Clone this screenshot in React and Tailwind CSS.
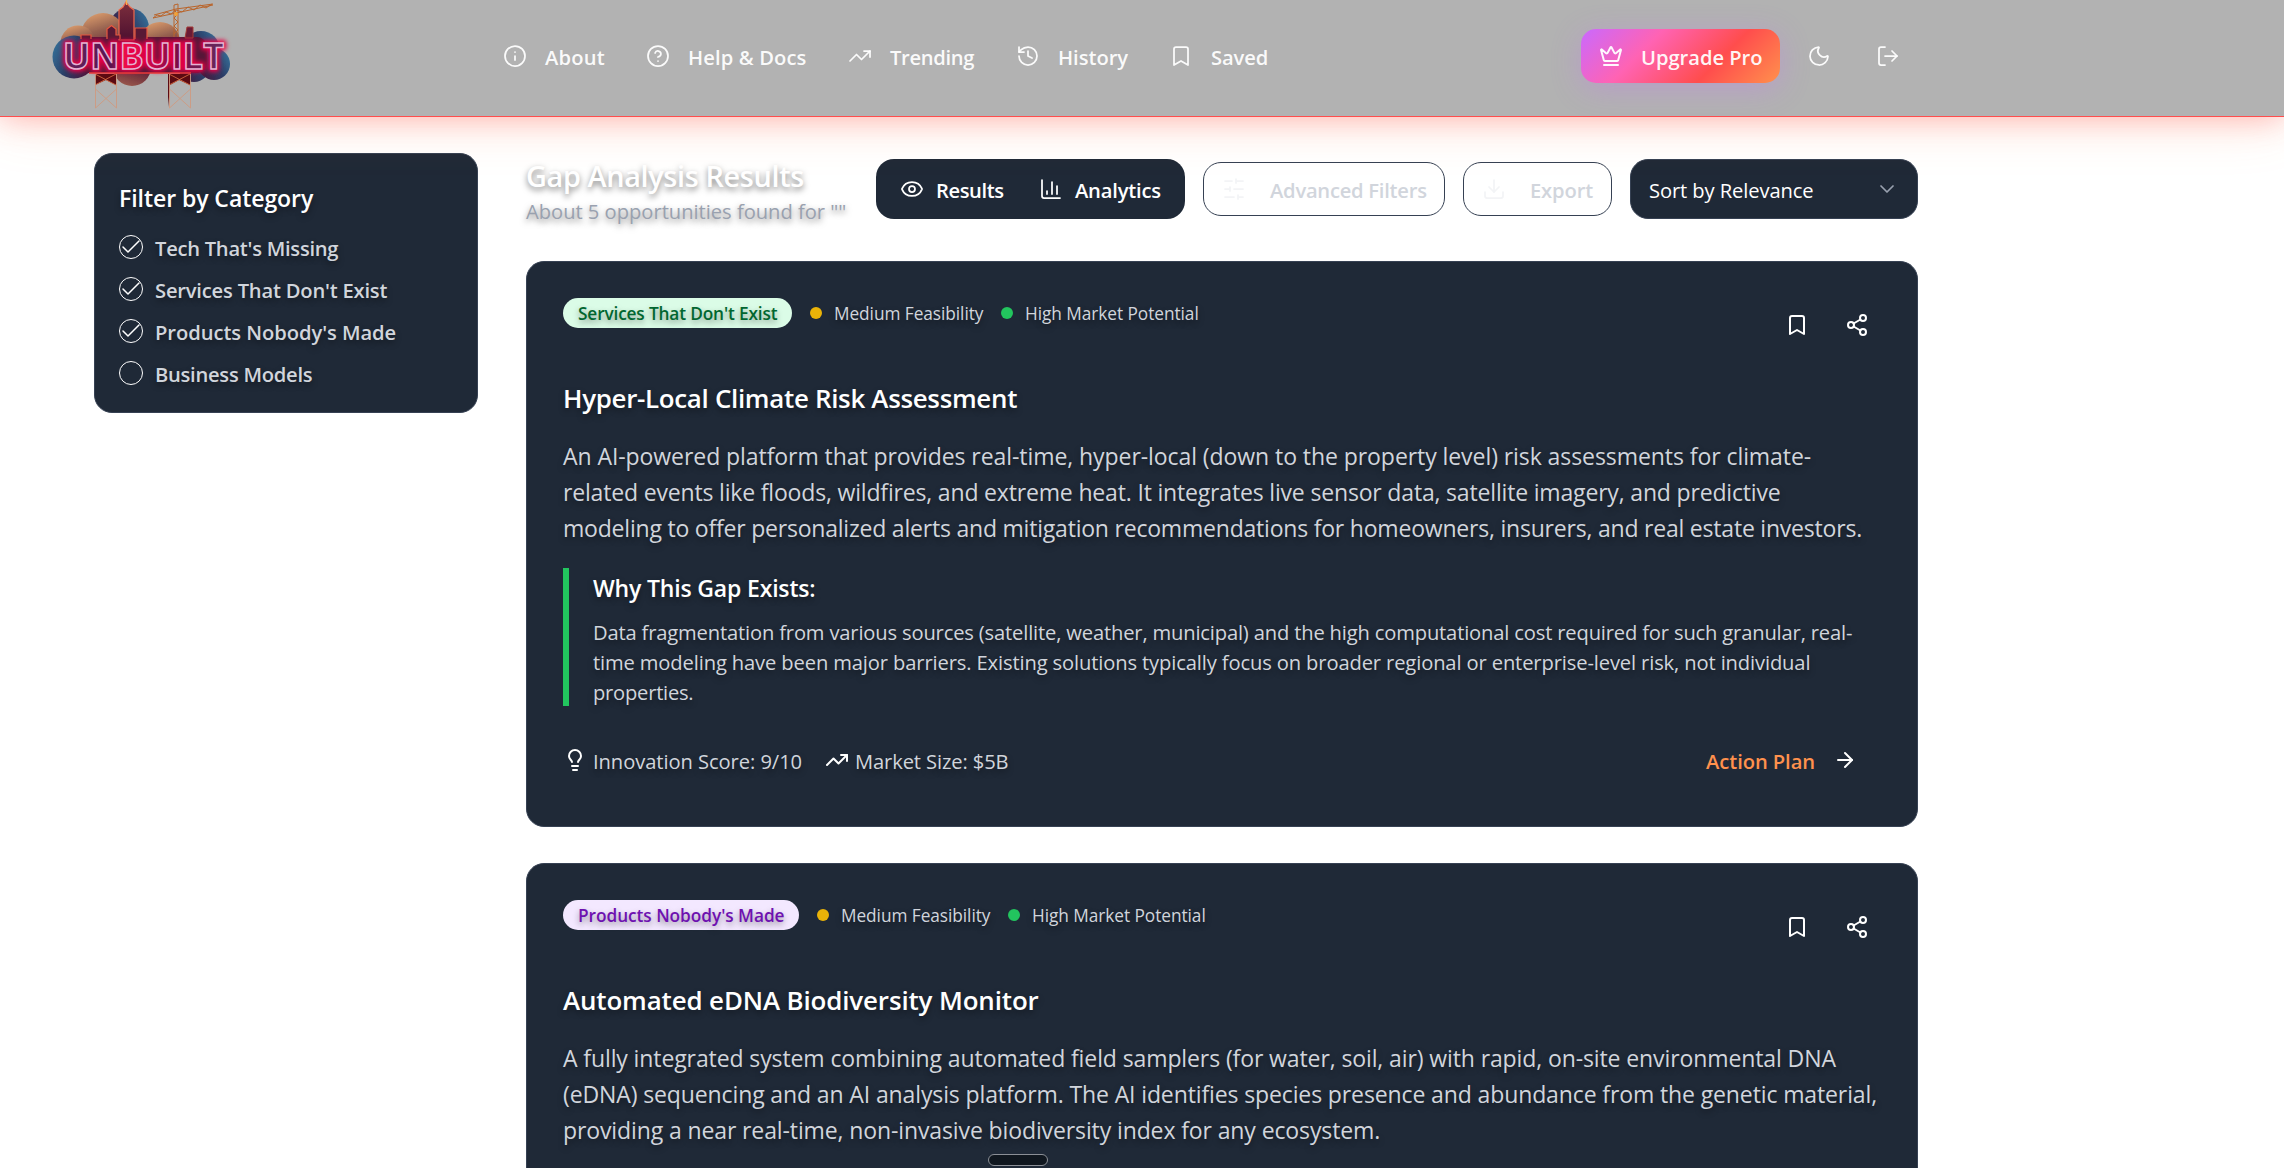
import {
  ArrowRight, Bookmark, ChartColumn, Check, ChevronDown, CircleHelp, Crown, Download, Eye,
  History, Info, Lightbulb, LogOut, Moon, Share2, TrendingUp,
} from "lucide-react";

const shadow = "[text-shadow:0_3px_6px_rgba(0,0,0,0.4)]";

function Logo() {
  return (
    <svg width="195" height="116" viewBox="0 0 195 116" aria-label="Unbuilt">
      <defs>
        <linearGradient id="blueL" x1="0" y1="0.2" x2="1" y2="0.6">
          <stop offset="0" stopColor="#34729b" />
          <stop offset="0.5" stopColor="#2b3a63" />
          <stop offset="1" stopColor="#4d1238" />
        </linearGradient>
        <linearGradient id="blueR" x1="1" y1="0.2" x2="0" y2="0.7">
          <stop offset="0" stopColor="#34729b" />
          <stop offset="0.45" stopColor="#2c3c66" />
          <stop offset="1" stopColor="#4a1438" />
        </linearGradient>
        <linearGradient id="peach" x1="0.3" y1="0" x2="0.6" y2="1">
          <stop offset="0" stopColor="#d99a6b" />
          <stop offset="0.4" stopColor="#94604f" />
          <stop offset="1" stopColor="#4e1732" />
        </linearGradient>
        <linearGradient id="under" x1="0" y1="1" x2="0.3" y2="0">
          <stop offset="0" stopColor="#a4624f" />
          <stop offset="0.7" stopColor="#561733" />
        </linearGradient>
        <linearGradient id="tower" x1="0" y1="0" x2="0" y2="1">
          <stop offset="0" stopColor="#7d2f3d" />
          <stop offset="1" stopColor="#4d1030" />
        </linearGradient>
        <linearGradient id="letters" x1="0" y1="0" x2="1" y2="0">
          <stop offset="0" stopColor="#64225c" />
          <stop offset="0.3" stopColor="#5c1450" />
          <stop offset="0.38" stopColor="#ee0b48" />
          <stop offset="0.52" stopColor="#d8084a" />
          <stop offset="0.7" stopColor="#7d0b45" />
          <stop offset="1" stopColor="#632a5e" />
        </linearGradient>
        <filter id="glow" x="-20%" y="-60%" width="140%" height="220%">
          <feGaussianBlur stdDeviation="2.2" />
        </filter>
        <filter id="soft" x="-5%" y="-5%" width="110%" height="110%">
          <feGaussianBlur stdDeviation="0.6" />
        </filter>
      </defs>
      <g filter="url(#soft)">
        <circle cx="84" cy="28" r="20" fill="url(#blueR)" />
        <circle cx="58" cy="35" r="22" fill="url(#peach)" />
        <circle cx="33" cy="43" r="17.5" fill="url(#peach)" />
        <circle cx="115" cy="42" r="20" fill="url(#peach)" />
        <circle cx="87" cy="67" r="19" fill="url(#under)" />
        <circle cx="149" cy="66" r="16" fill="url(#blueR)" />
        <circle cx="156" cy="50" r="19" fill="url(#blueR)" />
        <circle cx="169" cy="64" r="16" fill="url(#blueR)" />
        <circle cx="29" cy="57" r="21.5" fill="url(#blueL)" />
        <rect x="34" y="37" width="128" height="36" rx="10" fill="#561238" />
      </g>
      <path d="M74 40V10l4-3 3-5 4 5 4 3v30z" fill="url(#tower)" stroke="#ee6a4c" strokeWidth="1.2" />
      <path d="M81.500 0v5" stroke="#f8b04e" strokeWidth="1.2" />
      <path d="M62 39V29l4.500-3.500L71 29v6h4v4M90 39V28h12v11M36 39v-4h10v4" fill="#581935" stroke="#e8573f" strokeWidth="1.2" />
      <path d="M142 27h6v11h-8z" fill="#6b1a35" stroke="#a33b36" />
      <g fill="none" stroke="#b9652c" strokeWidth="1">
        <path d="M129 37V5l4-1v33M129 34l4-4-4-4 4-4-4-4 4-4-4-4" />
        <path d="M108 18l60-13M109 15l22-6 37-5M108 18l4-3 4 1 5-4 5 2 5-4 6 2 6-5 6 3 6-5 6 3 6-4" />
      </g>
      <circle cx="131" cy="14" r="2" fill="#f2a238" />
      <g fontFamily="'Open Sans', sans-serif" fontWeight="700" fontSize="36.500">
        <text x="18" y="69" textLength="161" lengthAdjust="spacingAndGlyphs" fill="#e80044" stroke="#e80044" strokeWidth="6" strokeLinejoin="round" filter="url(#glow)">UNBUILT</text>
        <text x="18" y="69" textLength="161" lengthAdjust="spacingAndGlyphs" fill="url(#letters)" stroke="#e6b2d2" strokeWidth="1.500">UNBUILT</text>
      </g>
      <path d="M44 73h102" stroke="#ec3a3a" strokeWidth="1.500" />
      <path d="M50 74h21v11l-10-5-11 5zM123 74h22v11l-11-5-9 5-1 22-1-10z" fill="#5c0a12" />
      <g fill="none" stroke="#d2663e" strokeWidth="0.900">
        <path d="M50 74l21 11M71 74L50 85M124 74l21 11M145 74l-21 11" />
      </g>
      <g fill="none" stroke="#cf9a80" strokeWidth="0.900">
        <path d="M50.500 74v34M71.500 74v34M50.500 89l21 19M71.500 89l-21 19M124.500 74v34M145.500 74v34M124.500 89l21 19M145.500 89l-21 19" />
      </g>
    </svg>
  );
}

function SlidersIcon() {
  return (
    <svg width="24" height="24" viewBox="0 0 24 24" fill="none" stroke="currentColor" strokeWidth="1.75" strokeLinecap="round">
      <path d="M21 4h-7M10 4H3M21 12h-9M8 12H3M21 20h-5M12 20H3M14 2v4M8 10v4M16 18v4" />
    </svg>
  );
}

const nav = [
  { label: "About", Icon: Info, box: "w-[143px]", track: "tracking-[0.011em]" },
  { label: "Help & Docs", Icon: CircleHelp, box: "w-[202px]", track: "tracking-[0.006em]" },
  { label: "Trending", Icon: TrendingUp, box: "w-[168px]", track: "tracking-[-0.016em]" },
  { label: "History", Icon: History, box: "w-[153px]", track: "tracking-[-0.002em]" },
  { label: "Saved", Icon: Bookmark, box: "w-[100px]", track: "tracking-[-0.004em]" },
];

function Header() {
  return (
    <header className="relative z-10 flex h-[117px] items-start border-b border-[#ff4d4d] bg-[#b2b2b2] pl-[45px] text-[20.16px] leading-[30px] font-semibold text-white/95 shadow-[0_0_30px_rgba(255,77,77,0.4),0_0_60px_rgba(255,145,77,0.2)]">
      <Logo />
      <nav className="ml-[263px] flex w-[1078px] pt-[42px]">
        {nav.map(({ label, Icon, box, track }) => (
          <a key={label} className={`flex shrink-0 gap-[18px] ${box}`}>
            <Icon size={24} strokeWidth={1.75} className="mt-[2px]" />
            <span className={`whitespace-nowrap ${track}`}>{label}</span>
          </a>
        ))}
      </nav>
      <button className="mt-[29px] flex h-[54px] w-[199px] gap-[18px] rounded-[15px] bg-[linear-gradient(135deg,#c969ff_0%,#ff63b3_33%,#ff4d4d_67%,#ff914d_100%)] pt-[13px] pl-[18px] shadow-[0_6px_30px_rgba(201,105,255,0.3)]">
        <Crown size={24} strokeWidth={2} className="mt-[2px]" />
        <span className="whitespace-nowrap tracking-[-0.002em]">Upgrade Pro</span>
      </button>
      <Moon size={24} strokeWidth={1.75} className="mt-[44px] ml-[27px]" />
      <LogOut size={24} strokeWidth={1.75} className="mt-[44px] ml-[45px]" />
    </header>
  );
}

const categories = [
  { label: "Tech That's Missing", on: true, track: "tracking-[-0.013em]" },
  { label: "Services That Don't Exist", on: true, track: "tracking-[-0.01em]" },
  { label: "Products Nobody's Made", on: true, track: "tracking-[-0.003em]" },
  { label: "Business Models", on: false, track: "tracking-[-0.013em]" },
];

function Sidebar() {
  return (
    <aside className={`h-[260px] w-[384px] shrink-0 rounded-[18px] border border-gray-700 bg-[#1f2937] px-6 pt-[26px] ${shadow}`}>
      <h3 className="text-[23.04px] leading-[36px] font-semibold tracking-[-0.003em] text-white">Filter by Category</h3>
      <ul className="mt-[17px] flex flex-col gap-3">
        {categories.map(({ label, on, track }) => (
          <li key={label} className="flex h-[30px] gap-3">
            <span className="mt-[2px] flex size-6 shrink-0 items-center justify-center rounded-full border border-white text-white">
              {on && <Check size={24} strokeWidth={1.5} className="shrink-0" />}
            </span>
            <span className={`text-[20.16px] leading-[30px] font-semibold text-gray-300 ${track}`}>{label}</span>
          </li>
        ))}
      </ul>
    </aside>
  );
}

function Toolbar() {
  return (
    <div className="flex h-[60px] items-center text-[20.16px] leading-[30px] font-semibold">
      <div className="w-[350px] shrink-0 pt-[5px] whitespace-nowrap [text-shadow:0_3px_6px_rgba(0,0,0,0.5)]">
        <h2 className="text-[28.8px] leading-[36px] tracking-[-0.012em] text-white">Gap Analysis Results</h2>
        <p className="mt-[2px] text-[20.16px] leading-[30px] font-normal tracking-[-0.001em] text-gray-400">About 5 opportunities found for ""</p>
      </div>
      <div className="flex h-[60px] w-[309px] rounded-[18px] bg-[#1f2937] pt-4 pl-6 text-white">
        <div className="flex w-[139px] gap-3">
          <Eye size={24} strokeWidth={1.75} className="mt-[2px]" />
          <span className="tracking-[-0.02em]">Results</span>
        </div>
        <div className="flex gap-3">
          <ChartColumn size={24} strokeWidth={1.75} className="mt-[2px]" />
          <span className="tracking-[-0.01em]">Analytics</span>
        </div>
      </div>
      <button className="ml-[18px] flex h-[54px] w-[242px] gap-6 rounded-[18px] border border-gray-700 pt-3 pl-[18px] text-gray-100">
        <span className="mt-[2px]"><SlidersIcon /></span>
        <span className="whitespace-nowrap tracking-[-0.012em] text-gray-300">Advanced Filters</span>
      </button>
      <button className="ml-[18px] flex h-[54px] w-[149px] gap-6 rounded-[18px] border border-gray-700 pt-3 pl-[18px] text-gray-100">
        <Download size={24} strokeWidth={1.75} className="mt-[2px]" />
        <span className="tracking-[-0.007em] text-gray-300">Export</span>
      </button>
      <button className="ml-[18px] flex h-[60px] w-[288px] justify-between rounded-[18px] border border-gray-700 bg-[#1f2937] pt-[15px] pr-[18px] pl-[18px] font-normal text-white">
        <span className="tracking-[-0.005em]">Sort by Relevance</span>
        <ChevronDown size={24} strokeWidth={1.75} className="mt-[2px] text-gray-400" />
      </button>
    </div>
  );
}

const cards = [
  {
    tag: "Services That Don't Exist",
    tagStyle: "w-[229px] bg-green-100 text-green-800 tracking-[-0.009em]",
    title: "Hyper-Local Climate Risk Assessment",
    titleTrack: "tracking-[-0.012em]",
    lines: [
      ["An AI-powered platform that provides real-time, hyper-local (down to the property level) risk assessments for climate-", "tracking-[-0.0036em]"],
      ["related events like floods, wildfires, and extreme heat. It integrates live sensor data, satellite imagery, and predictive", "tracking-[-0.0081em]"],
      ["modeling to offer personalized alerts and mitigation recommendations for homeowners, insurers, and real estate investors.", "tracking-[-0.0097em]"],
    ],
  },
  {
    tag: "Products Nobody's Made",
    tagStyle: "w-[236px] bg-purple-100 text-purple-800 tracking-[-0.003em]",
    title: "Automated eDNA Biodiversity Monitor",
    titleTrack: "tracking-[-0.005em]",
    lines: [
      ["A fully integrated system combining automated field samplers (for water, soil, air) with rapid, on-site environmental DNA", "tracking-[-0.0052em]"],
      ["(eDNA) sequencing and an AI analysis platform. The AI identifies species presence and abundance from the genetic material,", "tracking-[-0.0058em]"],
      ["providing a near real-time, non-invasive biodiversity index for any ecosystem.", "tracking-[-0.0055em]"],
    ],
  },
];

const reasons = [
  ["Data fragmentation from various sources (satellite, weather, municipal) and the high computational cost required for such granular, real-", "tracking-[-0.0082em]"],
  ["time modeling have been major barriers. Existing solutions typically focus on broader regional or enterprise-level risk, not individual", "tracking-[-0.0065em]"],
  ["properties.", "tracking-[-0.012em]"],
];

function Card({ card, full }) {
  return (
    <article className={`h-[566px] shrink-0 rounded-[18px] border border-gray-700 bg-[#1f2937] p-9 text-gray-300 ${shadow}`}>
      <div className="flex h-[54px] justify-between">
        <div className="flex h-[30px] items-center text-[17.28px] leading-[24px] whitespace-nowrap">
          <span className={`h-[30px] rounded-full pt-[4px] pl-[15px] font-semibold ${card.tagStyle}`}>{card.tag}</span>
          <span className="ml-[18px] size-3 rounded-full bg-[#eab308]" />
          <span className="ml-3 w-[150px] pt-[2px] tracking-[-0.0034em]">Medium Feasibility</span>
          <span className="ml-[17px] size-3 rounded-full bg-[#22c55e]" />
          <span className="ml-3 pt-[2px] tracking-[-0.003em]">High Market Potential</span>
        </div>
        <div className="flex gap-9 pt-[15px] pr-3 text-white">
          <Bookmark size={24} strokeWidth={2} />
          <Share2 size={24} strokeWidth={2} />
        </div>
      </div>
      <h3 className={`mt-[25px] text-[25.92px] leading-[42px] font-semibold text-white ${card.titleTrack}`}>{card.title}</h3>
      <p className="mt-[19px] text-[23.04px] leading-[36px]">
        {card.lines.map(([text, track]) => (
          <span key={text} className={`block whitespace-nowrap ${track}`}>{text}</span>
        ))}
      </p>
      {full && (
        <>
          <div className="mt-[22px] h-[138px] border-l-[6px] border-[#22c55e] pt-[2px] pl-6">
            <h4 className="text-[23.04px] leading-[36px] font-semibold tracking-[-0.008em] text-white">Why This Gap Exists:</h4>
            <p className="mt-[11px] text-[20.16px] leading-[30px]">
              {reasons.map(([text, track]) => (
                <span key={text} className={`block whitespace-nowrap ${track}`}>{text}</span>
              ))}
            </p>
          </div>
          <div className="mt-10 flex h-[30px] text-[20.16px] leading-[30px]">
            <Lightbulb size={24} strokeWidth={2} className="mt-[2px] text-white" />
            <span className="ml-[6px] w-[208px] whitespace-nowrap tracking-[-0.0035em]">Innovation Score: 9/10</span>
            <TrendingUp size={24} strokeWidth={2} className="mt-[2px] ml-6 text-white" />
            <span className="ml-[6px] tracking-[-0.006em]">Market Size: $5B</span>
            <button className="mr-6 ml-auto flex gap-[18px] font-semibold text-[#ff914d] [text-shadow:none]">
              <span className="tracking-[-0.004em]">Action Plan</span>
              <ArrowRight size={24} strokeWidth={2} className="mt-[2px] text-white" />
            </button>
          </div>
        </>
      )}
    </article>
  );
}

export default function App() {
  return (
    <div className="relative h-[1168px] w-[2284px] overflow-hidden bg-white font-['Open_Sans',sans-serif]">
      <Header />
      <div className="flex gap-12 pt-9 pl-[94px]">
        <Sidebar />
        <main className="flex w-[1392px] flex-col pt-[6px]">
          <Toolbar />
          <div className="mt-[42px] flex flex-col gap-9">
            {cards.map((card, i) => (
              <Card key={card.title} card={card} full={i === 0} />
            ))}
          </div>
        </main>
      </div>
      <div className="absolute bottom-[2px] left-[988px] h-3 w-[60px] rounded-md border border-[#8b8f96] bg-[#10171f]" />
    </div>
  );
}
